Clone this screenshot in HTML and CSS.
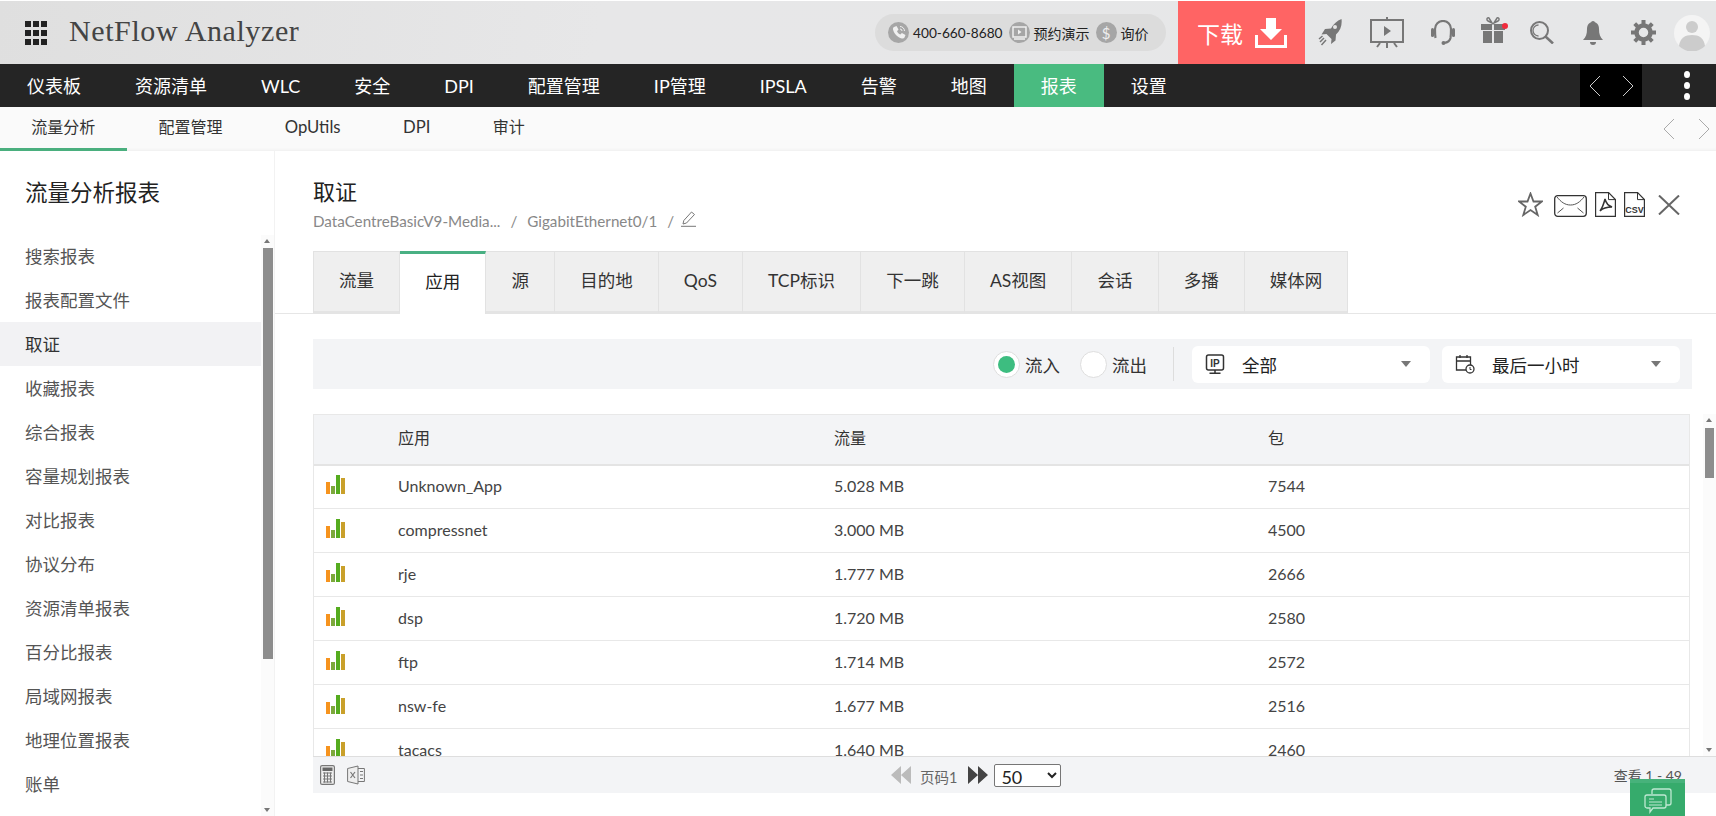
FILE: index.html
```html
<!DOCTYPE html>
<html lang="zh">
<head>
<meta charset="utf-8">
<title>NetFlow Analyzer</title>
<link rel="stylesheet" href="styles.css">
</head>
<body>
<header class="topbar">
  <span class="grid-icon"><i></i><i></i><i></i><i></i><i></i><i></i><i></i><i></i><i></i></span>
  <span class="brand">NetFlow Analyzer</span>
  <div class="pill">
    <span class="pill-ic"><svg viewBox="0 0 21 21"><path fill="#f0f0f0" d="M6 5l2.500-1 2 3.600-1.500 1.600c.6 1.500 1.800 2.700 3.300 3.300l1.600-1.500 3.600 2-1 2.500c-.5 1-1.600 1.300-2.700 1-4.200-1-7.700-4.500-8.700-8.700C4.800 6.700 5 5.600 6 5z"/><path fill="none" stroke="#f0f0f0" d="M12 4.500a4.500 4.500 0 0 1 4.500 4.500M12 7a2 2 0 0 1 2 2"/></svg></span>
    <span class="pill-tx pill-num">400-660-8680</span>
    <span class="pill-ic"><svg viewBox="0 0 21 21"><rect x="4" y="5" width="13" height="10" fill="none" stroke="#f0f0f0" stroke-width="1.500"/><path d="M9 7.500l3.500 2.500-3.500 2.500z" fill="#f0f0f0"/><path d="M5 17h11" stroke="#f0f0f0" stroke-width="1.500"/></svg></span>
    <span class="pill-tx">预约演示</span>
    <span class="pill-ic pill-dollar">$</span>
    <span class="pill-tx">询价</span>
  </div>
  <a class="download">下载
    <svg class="dl-ic" viewBox="0 0 32 30"><path fill="#fff" d="M11 0h10v11h6L16 22 5 11h6z"/><path fill="none" stroke="#fff" stroke-width="3" d="M1.500 17v11.500h29V17"/></svg>
  </a>
  <svg class="ti ti-rocket" viewBox="0 0 24 28"><path fill="#777" d="M23.500 0c.8 6-1 11.500-5.500 15.500l-.5 6-4.500 3.500.5-5-5-5-5 .5L7 10l6-.5C15.500 5 19 1.500 23.500 0z"/><path stroke="#777" stroke-width="1.500" d="M6 19l-4 4M8 21l-4.500 5M4.500 17L1 20"/><circle cx="17" cy="8" r="2" fill="#e6e6e6"/></svg>
  <svg class="ti ti-pres" viewBox="0 0 34 31"><path d="M17 0v3" stroke="#777" stroke-width="2"/><rect x="1" y="3" width="32" height="22" fill="none" stroke="#777" stroke-width="2"/><path d="M14 9l7 5-7 5z" fill="#777"/><path d="M17 25v6M10 26l-3 4M24 26l3 4" stroke="#777" stroke-width="2"/></svg>
  <svg class="ti ti-head" viewBox="0 0 24 25"><path d="M4.500 18C4 15 4 12 4 9a8 8 0 0 1 16 0c0 3.500 0 6-.5 9-.6 3-3 4.500-6.500 5" fill="none" stroke="#777" stroke-width="2.200"/><rect x="0" y="8" width="3" height="9" rx="1.500" fill="#777"/><rect x="21" y="8" width="3" height="9" rx="1.500" fill="#777"/><circle cx="12.500" cy="23" r="2" fill="#777"/></svg>
  <svg class="ti ti-gift" viewBox="0 0 27 27"><path d="M0 8h11v6H0zM13 8h11v6H13zM2 15h9v12H2zM13 15h9v12h-9z" fill="#777"/><path d="M11 7L8 2c-2-1-3 2-1 3zM13 7l3-5c2-1 3 2 1 3z" fill="none" stroke="#777" stroke-width="1.500"/><circle cx="24" cy="10" r="3" fill="#f02b3c"/></svg>
  <svg class="ti ti-search" viewBox="0 0 24 23"><circle cx="9.500" cy="9.500" r="8.500" fill="none" stroke="#777" stroke-width="2"/><path d="M8.500 4a5.500 5.500 0 0 0 0 11" fill="none" stroke="#777" stroke-width="1.300"/><path d="M15.500 15.500L23 22.500" stroke="#777" stroke-width="2.500"/></svg>
  <svg class="ti ti-bell" viewBox="0 0 20 24"><circle cx="10" cy="2" r="2" fill="#777"/><path d="M10 1c4 0 6 3 6 7 0 5 1 8 4 11H0c3-3 4-6 4-11 0-4 2-7 6-7z" fill="#777"/><path d="M7 21h6a3 3 0 0 1-6 0z" fill="#777"/></svg>
  <svg class="ti ti-gear" viewBox="0 0 25 25"><circle cx="12.500" cy="12.500" r="7" fill="none" stroke="#777" stroke-width="4.500"/><path d="M12.500 0v25M0 12.500h25M3.700 3.700l17.600 17.600M21.300 3.700L3.700 21.300" stroke="#777" stroke-width="4" stroke-dasharray="4 17 4"/></svg>
  <svg class="ti ti-avatar" viewBox="0 0 36 36"><circle cx="18" cy="18" r="18" fill="#f4f4f4"/><circle cx="18" cy="12" r="6" fill="#ccc"/><path d="M5 31c1-8 6-11 13-11s12 3 13 11a18 18 0 0 1-26 0z" fill="#ccc"/></svg>
</header>

<nav class="mainnav">
  <a class="mn">仪表板</a><a class="mn">资源清单</a><a class="mn">WLC</a><a class="mn">安全</a><a class="mn">DPI</a><a class="mn">配置管理</a><a class="mn">IP管理</a><a class="mn">IPSLA</a><a class="mn">告警</a><a class="mn">地图</a><a class="mn mn-on">报表</a><a class="mn">设置</a>
  <div class="nav-arrows">
    <svg class="chev" viewBox="0 0 12 20"><path d="M11 0L1 10l10 10" fill="none" stroke="#ccc"/></svg>
    <svg class="chev" viewBox="0 0 12 20"><path d="M1 0l10 10L1 20" fill="none" stroke="#ccc"/></svg>
  </div>
  <div class="nav-more"><i></i><i></i><i></i></div>
</nav>

<nav class="subnav">
  <a class="sn sn-on">流量分析</a><a class="sn">配置管理</a><a class="sn sn-lat">OpUtils</a><a class="sn sn-lat">DPI</a><a class="sn">审计</a>
  <div class="sub-arrows">
    <svg class="chev" viewBox="0 0 12 20"><path d="M11 0L1 10l10 10" fill="none" stroke="#aaa"/></svg>
    <svg class="chev" viewBox="0 0 12 20"><path d="M1 0l10 10L1 20" fill="none" stroke="#aaa"/></svg>
  </div>
</nav>

<div class="content">
  <aside class="sidebar">
    <h2 class="side-title">流量分析报表</h2>
    <ul class="side-list">
      <li>搜索报表</li><li>报表配置文件</li><li class="side-on">取证</li><li>收藏报表</li><li>综合报表</li><li>容量规划报表</li><li>对比报表</li><li>协议分布</li><li>资源清单报表</li><li>百分比报表</li><li>局域网报表</li><li>地理位置报表</li><li>账单</li>
    </ul>
    <div class="side-track">
      <span class="arr-up"></span><span class="side-thumb"></span><span class="arr-down"></span>
    </div>
  </aside>

  <main class="main">
    <div class="head">
      <div>
        <h1 class="title">取证</h1>
        <div class="crumb"><span>DataCentreBasicV9-Media...</span><span class="sl">/</span><span>GigabitEthernet0/1</span><span class="sl">/</span>
          <svg class="pen" viewBox="0 0 15 16"><path d="M10.500 1l3 2.500L5.500 12 2 13l.8-3.500z" fill="none" stroke="#777"/><path d="M0 15.300h15" stroke="#777"/></svg>
        </div>
      </div>
      <div class="actions">
        <svg class="ac-star" viewBox="0 0 25 25"><path d="M12.500 1.500l3 8h8.500l-6.800 5.200 2.500 8.300-7.200-5-7.200 5 2.500-8.300L1 9.500h8.500z" fill="none" stroke="#666" stroke-width="1.800"/></svg>
        <svg class="ac-mail" viewBox="0 0 33 22"><rect x=".7" y=".7" width="31.600" height="20.600" rx="3" fill="none" stroke="#333" stroke-width="1.300"/><path d="M3 2c4 5 8 8 13.500 8S26 7 30 2M3.500 18l6-5M29.500 18l-6-5" fill="none" stroke="#555"/></svg>
        <svg class="ac-file" viewBox="0 0 21 25"><path d="M.6.6h13l6.800 7v16.800H.6z" fill="none" stroke="#333" stroke-width="1.200"/><path d="M13.500.6v7h6.900" fill="none" stroke="#333"/><path d="M10 7c-1 4-2 8-5 12 3-3 8-4 12-4-3-1-6-4-7-8z" fill="none" stroke="#333" stroke-width="1.500"/></svg>
        <svg class="ac-file" viewBox="0 0 21 25"><path d="M.6.6h13l6.800 7v16.800H.6z" fill="none" stroke="#333" stroke-width="1.200"/><path d="M13.500.6v7h6.900" fill="none" stroke="#333"/><text x="10.500" y="20.500" class="csv-t">CSV</text></svg>
        <svg class="ac-close" viewBox="0 0 22 20"><path d="M1 .5l20 19M21 .5l-20 19" stroke="#666" stroke-width="2"/></svg>
      </div>
    </div>

    <div class="tabs">
      <a class="tab">流量</a><a class="tab tab-on">应用</a><a class="tab">源</a><a class="tab">目的地</a><a class="tab">QoS</a><a class="tab">TCP标识</a><a class="tab">下一跳</a><a class="tab">AS视图</a><a class="tab">会话</a><a class="tab">多播</a><a class="tab">媒体网</a>
    </div>

    <div class="filter">
      <span class="radio radio-on"></span><span class="rlabel">流入</span>
      <span class="radio radio-2"></span><span class="rlabel">流出</span>
      <span class="fdiv"></span>
      <div class="fsel fsel-1">
        <svg class="fs-ic" viewBox="0 0 19 20"><rect x="1" y="1" width="17" height="15" rx="2" fill="none" stroke="#333" stroke-width="1.500"/><text x="9.500" y="12.500" class="ip-t">IP</text><path d="M9.500 16v3M4 19.300h11" stroke="#333" stroke-width="1.500"/></svg>
        <span class="fs-tx">全部</span><span class="caret"></span>
      </div>
      <div class="fsel">
        <svg class="fs-ic" viewBox="0 0 20 20"><path d="M11 16H1.500V3h14v8M1.500 7h14M5 1v3M12 1v3" fill="none" stroke="#333" stroke-width="1.300"/><circle cx="15" cy="15" r="4" fill="none" stroke="#333" stroke-width="1.300"/><path d="M15 13v2.500h1.500" fill="none" stroke="#333"/></svg>
        <span class="fs-tx">最后一小时</span><span class="caret"></span>
      </div>
    </div>

    <div class="tablezone">
      <div class="tablewrap">
        <table class="grid">
          <colgroup><col class="c0"><col class="c1"><col class="c2"><col></colgroup>
          <thead><tr><th></th><th>应用</th><th>流量</th><th>包</th></tr></thead>
          <tbody>
            <tr><td><span class="bars"><i></i><i></i><i></i><i></i></span></td><td>Unknown_App</td><td>5.028 MB</td><td>7544</td></tr>
            <tr><td><span class="bars"><i></i><i></i><i></i><i></i></span></td><td>compressnet</td><td>3.000 MB</td><td>4500</td></tr>
            <tr><td><span class="bars"><i></i><i></i><i></i><i></i></span></td><td>rje</td><td>1.777 MB</td><td>2666</td></tr>
            <tr><td><span class="bars"><i></i><i></i><i></i><i></i></span></td><td>dsp</td><td>1.720 MB</td><td>2580</td></tr>
            <tr><td><span class="bars"><i></i><i></i><i></i><i></i></span></td><td>ftp</td><td>1.714 MB</td><td>2572</td></tr>
            <tr><td><span class="bars"><i></i><i></i><i></i><i></i></span></td><td>nsw-fe</td><td>1.677 MB</td><td>2516</td></tr>
            <tr><td><span class="bars"><i></i><i></i><i></i><i></i></span></td><td>tacacs</td><td>1.640 MB</td><td>2460</td></tr>
          </tbody>
        </table>
      </div>
      <div class="tb-track"><span class="arr-up"></span><span class="tb-thumb"></span><span class="arr-down"></span></div>
    </div>

    <div class="pager">
      <div class="pg-left">
        <svg class="pg-calc" viewBox="0 0 15 20"><rect x=".6" y=".6" width="13.800" height="18.800" rx="1.500" fill="#eee" stroke="#777" stroke-width="1.200"/><rect x="2.500" y="2.500" width="10" height="3.500" fill="#666"/><path d="M3 8h9M3 11h9M3 14h9M3 17h9M4.500 7.500v10M7.500 7.500v10M10.500 7.500v10" stroke="#777"/></svg>
        <svg class="pg-xl" viewBox="0 0 18 20"><path d="M11 1L.6 3.500v13L11 19z" fill="#eee" stroke="#777"/><path d="M11 3.500h6.400v13H11M13 6.500h3M13 10h3M13 13.500h3" fill="none" stroke="#777"/><path d="M3.500 7l4.500 6M8 7l-4.500 6" stroke="#777" stroke-width="1.200"/></svg>
      </div>
      <div class="pg-mid">
        <svg class="pg-arrows" viewBox="0 0 20 18"><path d="M10 0v18L0 9zM20 0v18L10 9z" fill="#bbb"/></svg>
        <span class="pg-text">页码1</span>
        <svg class="pg-arrows pg-next" viewBox="0 0 20 18"><path d="M0 0v18l10-9zM10 0v18l10-9z" fill="#444"/></svg>
        <select class="pg-sel"><option>50</option></select>
      </div>
      <span class="pg-view">查看 1 - 49</span>
    </div>
  </main>
</div>

<div class="chat">
  <svg viewBox="0 0 28 27" class="chat-ic"><path d="M8 6V3a2 2 0 0 1 2-2h15a2 2 0 0 1 2 2v12a2 2 0 0 1-2 2h-3" fill="none" stroke="#bfe8d2" stroke-width="1.300"/><path d="M3 7h17a2 2 0 0 1 2 2v9a2 2 0 0 1-2 2H9l-3 4v-4H3a2 2 0 0 1-2-2V9a2 2 0 0 1 2-2z" fill="#36ab6c" stroke="#bfe8d2" stroke-width="1.300"/><path d="M5 11h5M5 14h13M5 17h13" stroke="#bfe8d2" stroke-width="1.200"/></svg>
</div>
</body>
</html>
```

FILE: styles.css
```css
* { box-sizing: border-box; }
html, body { margin: 0; padding: 0; height: 816px; overflow: hidden; background: #fff; }
body {
  font-family: Lato, "Noto Sans CJK SC", "Noto Sans", sans-serif;
  color: #333;
  position: relative;
}
a { text-decoration: none; color: inherit; }

/* top bar */
.topbar {
  height: 64px;
  border-top: 1px solid #fff;
  display: flex;
  align-items: center;
  padding-right: 6px;
  background: linear-gradient(100deg, #dfdfdf 0, #e7e7e8 35%, #e6e7e8 100%);
}
.grid-icon {
  display: grid;
  grid-template-columns: repeat(3, 6px);
  grid-auto-rows: 6px;
  gap: 3px 2px;
  margin-left: 25px;
}
.grid-icon i { background: #222; }
.brand {
  margin: 0 0 4px 22px;
  font-family: "Liberation Serif", serif;
  font-size: 30px;
  letter-spacing: .6px;
  color: #444;
  white-space: nowrap;
}
.pill {
  margin-left: auto;
  width: 291px;
  height: 37px;
  border-radius: 19px;
  background: #dcdcdc;
  display: flex;
  align-items: center;
  padding-left: 13px;
}
.pill-ic {
  width: 21px; height: 21px;
  border-radius: 50%;
  background: #a6a6a6;
  display: flex;
  align-items: center;
  justify-content: center;
  flex: none;
}
.pill-ic svg { width: 21px; height: 21px; display: block; }
.pill-dollar { color: #eee; font-size: 15px; }
.pill-tx { font-size: 14px; color: #222; margin: 0 6px 0 4px; white-space: nowrap; }
.pill-num { font-size: 13.700px; }
.download {
  margin-left: 12px;
  width: 127px;
  height: 63px;
  background: #ff6464;
  color: #fff;
  font-size: 23px;
  display: flex;
  align-items: center;
  padding-left: 19px;
}
.dl-ic { width: 32px; height: 30px; margin-left: 12px; }
.ti { display: block; flex: none; }
.ti-rocket { width: 24px; height: 28px; margin-left: 13px; }
.ti-pres { width: 34px; height: 31px; margin-left: 28px; }
.ti-head { width: 24px; height: 25px; margin-left: 27px; }
.ti-gift { width: 27px; height: 27px; margin-left: 26px; margin-top: -7px; }
.ti-search { width: 24px; height: 23px; margin-left: 22px; }
.ti-bell { width: 20px; height: 24px; margin-left: 29px; }
.ti-gear { width: 25px; height: 25px; margin-left: 28px; }
.ti-avatar { width: 36px; height: 36px; margin-left: 18px; }

/* main nav */
.mainnav {
  height: 43px;
  background: #252525;
  display: flex;
  align-items: stretch;
  color: #fff;
}
.mn {
  padding: 0 27px;
  font-size: 18px;
  line-height: 45px;
  white-space: nowrap;
}
.mn-on { background: #49bb80; }
.chev { width: 12px; height: 20px; display: block; }
.nav-arrows {
  margin-left: auto;
  width: 62px;
  background: #000;
  display: flex;
  align-items: center;
  justify-content: space-between;
  padding: 0 8px 0 9px;
}
.nav-more {
  width: 74px;
  display: flex;
  flex-direction: column;
  align-items: center;
  justify-content: center;
  gap: 4px;
  padding-left: 41px;
  padding-right: 25px;
}
.nav-more i { width: 6px; height: 7px; border-radius: 50%; background: #fff; display: block; flex: none; }

/* sub nav */
.subnav {
  height: 44px;
  background: #fafafa;
  display: flex;
  align-items: stretch;
  box-shadow: inset 0 -3px 3px -2px #eee;
}
.sn {
  padding: 0 31.200px;
  font-size: 16px;
  line-height: 40px;
  color: #333;
  white-space: nowrap;
}
.sn-lat { font-size: 16.700px; }
.sn-on { border-bottom: 3px solid #4aaf7e; padding-right: 32px; }
.sub-arrows {
  margin-left: auto;
  display: flex;
  align-items: center;
  gap: 23px;
  padding-right: 6px;
}

/* layout */
.content { display: flex; height: 665px; }
.sidebar {
  width: 275px;
  flex: none;
  position: relative;
  overflow: hidden;
  border-right: 1px solid #f2f2f2;
}
.side-title {
  margin: 0;
  padding: 26px 0 0 25px;
  height: 83px;
  font-size: 22.500px;
  line-height: 32px;
  font-weight: 400;
  color: #222;
}
.side-list { list-style: none; margin: 0; padding: 0; width: 261px; }
.side-list li {
  height: 44px;
  line-height: 46px;
  padding-left: 25px;
  font-size: 17.500px;
  color: #555;
  white-space: nowrap;
}
.side-list .side-on { background: #f2f2f4; color: #333; }
.side-track {
  position: absolute;
  left: 261px; top: 84px; bottom: 0;
  width: 13px;
  background: #fbfbfb;
}
.side-thumb {
  position: absolute;
  left: 2px; right: 1px;
  top: 13px;
  height: 411px;
  background: #8d8d8d;
}
.arr-up, .arr-down {
  position: absolute;
  left: 50%;
  margin-left: -3.500px;
  border-left: 3.500px solid transparent;
  border-right: 3.500px solid transparent;
}
.arr-up { top: 4px; border-bottom: 4px solid #777; }
.arr-down { bottom: 4px; border-top: 4px solid #777; }

.main { flex: 1; min-width: 0; }
.head {
  display: flex;
  justify-content: space-between;
  padding: 26px 36px 0 38px;
  height: 100px;
}
.title {
  margin: 0;
  font-size: 22px;
  line-height: 30px;
  font-weight: 400;
  color: #222;
}
.crumb {
  display: flex;
  align-items: center;
  height: 27px;
  font-size: 15.200px;
  color: #888;
  white-space: nowrap;
}
.sl { margin: 0 10px; }
.pen { width: 15px; height: 16px; margin-left: -3px; margin-top: -4px; }
.actions { display: flex; align-items: flex-start; padding-top: 15px; }
.ac-star { width: 25px; height: 25px; }
.ac-mail { width: 33px; height: 22px; margin-left: 11px; margin-top: 3px; }
.ac-file { width: 21px; height: 25px; margin-left: 8px; }
.ac-close { width: 22px; height: 20px; margin-left: 13px; margin-top: 3px; }
.csv-t { font: 700 9px "Liberation Sans", sans-serif; fill: #333; text-anchor: middle; }

.tabs {
  display: flex;
  height: 63px;
  padding-left: 38px;
  border-bottom: 1px solid #e6e6e6;
}
.tab {
  height: 63px;
  padding: 0 25.100px;
  background: #efefef;
  border-top: 1px solid #e2e2e2;
  border-right: 1px solid #e2e2e2;
  border-bottom: 3px solid #e4e4e4;
  font-size: 17.500px;
  line-height: 58px;
  color: #333;
  white-space: nowrap;
}
.tab:first-child { border-left: 1px solid #e2e2e2; }
.tab-on {
  background: #fff;
  border-top: 3px solid #49b083;
  border-bottom: 0;
  line-height: 55px;
  color: #222;
}

.filter {
  margin: 25px 24px 0 38px;
  height: 50px;
  background: #f3f4f6;
  display: flex;
  align-items: center;
  padding-right: 12px;
}
.radio {
  width: 27px; height: 27px;
  border-radius: 50%;
  background: #fff;
  border: 1px solid #dedede;
  flex: none;
  margin-left: auto;
  display: flex;
  align-items: center;
  justify-content: center;
}
.radio-on::after {
  content: "";
  width: 17px; height: 17px;
  border-radius: 50%;
  background: #3dbd80;
}
.radio-2 { margin-left: 20px; }
.rlabel { font-size: 17.500px; color: #333; margin-left: 5px; white-space: nowrap; }
.fdiv { width: 1px; height: 34px; background: #ddd; margin: 0 18px 0 26px; }
.fsel {
  width: 238px;
  height: 37px;
  background: #fff;
  border-radius: 6px;
  display: flex;
  align-items: center;
  padding: 0 19px 0 13px;
  font-size: 17.500px;
  color: #222;
}
.fsel-1 { margin-right: 12px; }
.fs-ic { width: 20px; height: 20px; flex: none; }
.fs-tx { margin-left: 17px; }
.caret {
  margin-left: auto;
  border-left: 5.500px solid transparent;
  border-right: 5.500px solid transparent;
  border-top: 6px solid #777;
}
.ip-t { font: 700 10px "Liberation Sans", sans-serif; fill: #333; text-anchor: middle; }

.tablezone {
  display: flex;
  height: 342px;
  margin: 25px 0 0 38px;
}
.tablewrap {
  width: 1377px;
  overflow: hidden;
  border-left: 1px solid #e8e8e8;
  border-right: 1px solid #e8e8e8;
}
.grid { width: 100%; border-collapse: collapse; table-layout: fixed; }
.c0 { width: 83px; }
.c1 { width: 436px; }
.c2 { width: 434px; }
.grid th {
  height: 50px;
  padding: 0 0 5px 1px;
  background: #f3f4f6;
  border-top: 1px solid #e8e8e8;
  border-bottom: 2px solid #e4e4e4;
  text-align: left;
  font-weight: 400;
  font-size: 16px;
  color: #333;
}
.grid td {
  height: 44px;
  padding: 0 0 1px 1px;
  border-bottom: 1px solid #e8e8e8;
  font-size: 16px;
  line-height: 12px;
  color: #444;
  white-space: nowrap;
}
.bars {
  display: flex;
  align-items: flex-end;
  gap: 1px;
  height: 19px;
  margin: -4px 0 0 11px;
}
.bars i { width: 4px; display: block; }
.bars i:nth-child(1) { height: 12px; background: #f6931e; }
.bars i:nth-child(2) { height: 8px; background: #7ca83c; }
.bars i:nth-child(3) { height: 19px; background: #55ac1f; }
.bars i:nth-child(4) { height: 16px; background: #c9a02a; }
.tb-track {
  position: relative;
  width: 13px;
  margin-left: auto;
  background: #fbfbfb;
}
.tb-thumb {
  position: absolute;
  left: 2px; right: 2px;
  top: 14px;
  height: 50px;
  background: #8d8d8d;
}

.pager {
  height: 37px;
  margin-left: 38px;
  background: #f3f4f6;
  border-top: 1px solid #dedede;
  display: flex;
  align-items: center;
  position: relative;
}
.pg-left { width: 578px; display: flex; align-items: center; padding-left: 7px; gap: 12px; }
.pg-calc { width: 15px; height: 20px; }
.pg-xl { width: 18px; height: 20px; }
.pg-mid { display: flex; align-items: center; }
.pg-arrows { width: 20px; height: 18px; }
.pg-text { font-size: 14.500px; color: #666; margin: 2px 11px 0 9px; white-space: nowrap; }
.pg-next { margin-right: 6px; }
.pg-sel {
  width: 67px;
  height: 23px;
  padding-left: 2px;
  font-family: Lato, sans-serif;
  font-size: 18px;
  background: #fff;
  border: 1px solid #767676;
  border-radius: 2px;
  color: #222;
}
.pg-view { margin-left: auto; padding-right: 34px; font-size: 14px; color: #555; white-space: nowrap; }

.chat {
  position: absolute;
  left: 1630px;
  bottom: 0;
  width: 55px;
  height: 37px;
  background: #36ab6c;
  border-top: 4px solid #47b27b;
  padding: 5px 0 0 14px;
  overflow: hidden;
}
.chat-ic { width: 28px; height: 27px; display: block; }
```
